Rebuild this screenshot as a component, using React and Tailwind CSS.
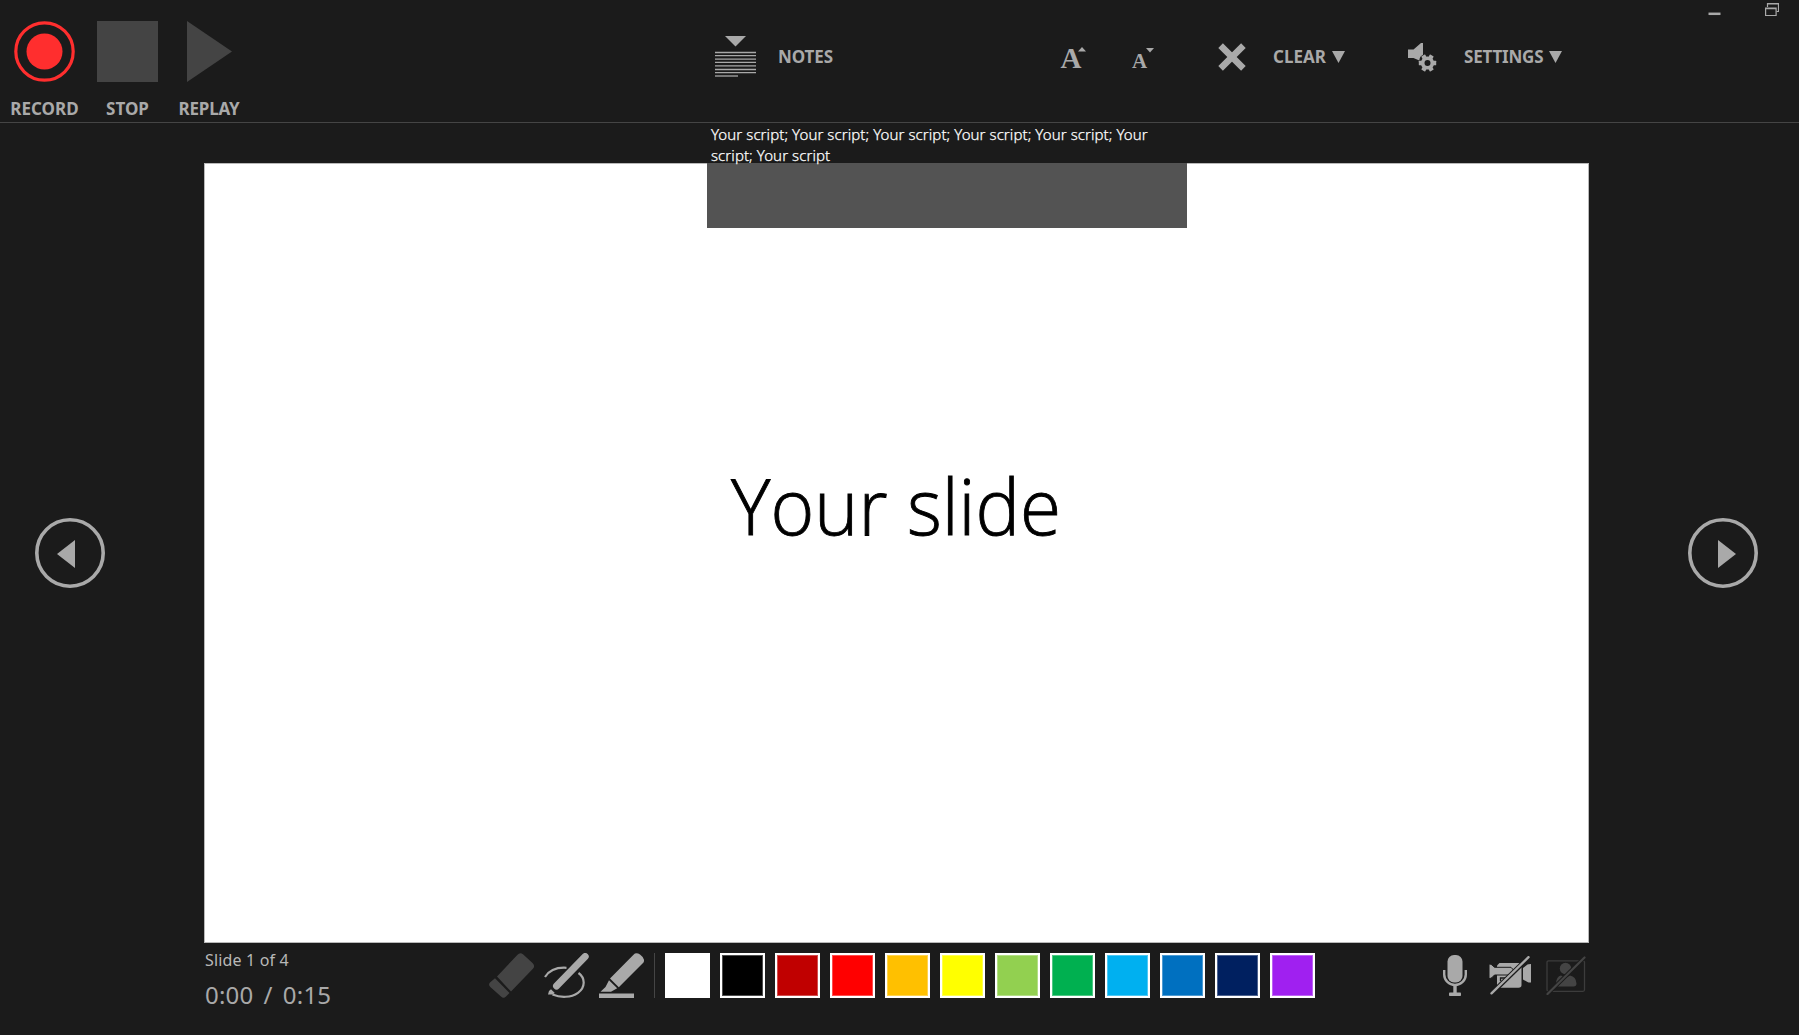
import React from "react";

const label = "font-['Noto_Sans','Open_Sans',sans-serif] text-[17px] leading-[20px] font-bold text-[#a9a9a9] whitespace-nowrap";

const swatches = [
  "#ffffff", "#000000", "#c00000", "#ff0000", "#ffc000", "#ffff00",
  "#92d050", "#00b050", "#00b0f0", "#0070c0", "#002060", "#a020f0",
];

function NotesIcon() {
  const lines = [52.5, 55.7, 59.2, 62.4, 65.8, 69.5, 72.6];
  return (
    <svg width="41" height="42" viewBox="0 36 41 42" className="shrink-0">
      <path d="M10 36h21l-10.500 10.500z" fill="#a9a9a9" />
      {lines.map((y) => (
        <path key={y} d={`M0 ${y}h41`} stroke="#a9a9a9" strokeWidth="1.300" />
      ))}
      <path d="M0 76h23" stroke="#a9a9a9" strokeWidth="1.300" />
    </svg>
  );
}

function AudioSettingsIcon() {
  return (
    <svg width="29" height="29" viewBox="0 0 29 29" className="shrink-0" fill="#a9a9a9">
      <path d="M0 6.500h5.500L13 0h2v11.800c-2.200 1-3.400 2.700-3.700 5.700L5.500 15H0z" />
      <g transform="translate(19.5 20)">
        <path
          fillRule="evenodd"
          d="M0-6.600a6.600 6.600 0 1 0 0 13.200a6.600 6.600 0 1 0 0-13.200zM0-3a3 3 0 1 1 0 6a3 3 0 1 1 0-6z"
        />
        {[30, 90, 150, 210, 270, 330].map((a) => (
          <rect key={a} x="-2.200" y="-8.700" width="4.400" height="4" rx="0.500" transform={`rotate(${a})`} />
        ))}
      </g>
    </svg>
  );
}

function EraserIcon() {
  return (
    <svg width="45" height="45" viewBox="0 0 45 45" fill="#444444" className="shrink-0">
      <path d="M8 23.500 28.500 1.800Q31 -1 34 1.300L43.500 10Q46.500 13 43.700 16L22 38.500z" />
      <path d="M6 25.300 20.500 40 17 43.600Q14.500 46 12 43.600L1.300 34Q-1 31.500 1 29.500z" />
    </svg>
  );
}

function PenIcon() {
  return (
    <svg width="45" height="45" viewBox="0 0 45 45" fill="none" className="shrink-0">
      <path d="M1 24C5.500 17 13 14.200 22.500 14.800" stroke="#a9a9a9" strokeWidth="2.200" />
      <path d="M34.500 20C41.500 25 41.500 34.500 34 39.800C27 44.600 17 45 8.500 41.500" stroke="#a9a9a9" strokeWidth="2.200" />
      <path d="M12.500 33 41.200 3.500" stroke="#a9a9a9" strokeWidth="7" strokeLinecap="round" />
      <path d="M7 36.200 10.800 40 8.500 41.500 4 41.500 5 38z" fill="#a9a9a9" />
    </svg>
  );
}

function HighlighterIcon() {
  return (
    <svg width="45" height="45" viewBox="0 0 45 45" fill="#a9a9a9" className="shrink-0">
      <path d="M11 25.500 34.500 1.800Q37 -1 41 1.500Q46.500 5.500 44.500 9.500L19.800 34.200z" />
      <path d="M10 27.300 18.200 35.200 12 38.800H1.500L6.500 34z" />
      <path d="M0 40.500h35V45H0z" />
    </svg>
  );
}

function MicIcon() {
  return (
    <svg width="24" height="41" viewBox="0 0 24 41" fill="#a9a9a9" className="shrink-0">
      <rect x="4.500" y="0" width="15" height="27.500" rx="6.500" />
      <path d="M1.200 15v4.500a10.800 10.500 0 0 0 21.600 0V15" fill="none" stroke="#a9a9a9" strokeWidth="2.400" />
      <path d="M10.300 29.500h3.400V38h-3.400z" />
      <rect x="6" y="37.500" width="12" height="3.500" rx="0.800" />
    </svg>
  );
}

function CameraOffIcon() {
  return (
    <svg width="42" height="39" viewBox="0 0 42 39" className="shrink-0" fill="#a9a9a9">
      <path d="M8 11V9.500L10.500 7H29.500Q32.500 7 32.500 10V29Q32.500 31.800 29.500 31.800H8z" />
      <path d="M34 12 38.500 8.500Q39 8 42 8V26.500Q39 26.500 38.500 26L34 23.500z" />
      <path
        d="M0 8Q2.500 8 3 9L5.500 11.300H22L24.500 14 21 19H5.500L3 21.500Q2.500 22.500 0 22.500z"
        stroke="#1b1b1b"
        strokeWidth="1"
      />
      <path d="M11.500 25V22H16" fill="none" stroke="#1b1b1b" strokeWidth="1.300" />
      <path d="M2.500 37.500 40 1" stroke="#1b1b1b" strokeWidth="4.600" />
      <path d="M2.500 37.300 39.500 1.200" stroke="#a9a9a9" strokeWidth="2.400" strokeLinecap="round" />
    </svg>
  );
}

function PreviewOffIcon() {
  return (
    <svg width="40" height="39" viewBox="0 0 40 39" className="shrink-0" fill="#444444">
      <rect x="1" y="4.800" width="37.500" height="30.500" rx="1.500" fill="none" stroke="#3c3c3c" strokeWidth="1.300" />
      <circle cx="19.500" cy="12.500" r="5.700" />
      <path d="M10 30.500V27Q10.500 20.500 15 19.500L19.500 22 24 19.500Q30 20.500 30.500 27.500Q30.500 30.500 27.500 30.500z" />
      <path d="M1.500 38 38.500 1.500" stroke="#1b1b1b" strokeWidth="4" />
      <path d="M1.500 38 38.500 1.500" stroke="#444444" strokeWidth="2.200" strokeLinecap="round" />
    </svg>
  );
}

function NavButton({ next }) {
  return (
    <button className="flex size-[70px] shrink-0 items-center justify-center" aria-label={next ? "Next" : "Previous"}>
      <svg width="70" height="70" viewBox="0 0 70 70">
        <circle cx="35" cy="35" r="33.200" fill="none" stroke="#a9a9a9" strokeWidth="3.600" />
        <path d={next ? "M30 22v28l18-14z" : "M40 22v28L22 36z"} fill="#a9a9a9" />
      </svg>
    </button>
  );
}

function DownTriangle() {
  return (
    <svg width="13" height="12" viewBox="0 0 13 12" className="shrink-0">
      <path d="M0 0h13L6.500 12z" fill="#a9a9a9" />
    </svg>
  );
}

export default function App() {
  return (
    <div className="flex h-[1035px] w-[1799px] flex-col overflow-hidden bg-[#1b1b1b] font-['Open_Sans','Noto_Sans',sans-serif]">
      <header className="flex h-[123px] shrink-0 border-b border-[#454545]">
        <div className="flex w-[715px] pt-[21px]">
          <button className="flex w-[89px] flex-col items-center gap-[17px]">
            <svg width="61" height="61" viewBox="0 0 61 61">
              <circle cx="30.500" cy="30.500" r="28.700" fill="none" stroke="#ff2e2e" strokeWidth="3.200" />
              <circle cx="30.500" cy="30.500" r="18" fill="#ff2e2e" />
            </svg>
            <span className={label}>RECORD</span>
          </button>
          <button className="flex w-[77px] flex-col items-center gap-[17px]">
            <span className="size-[61px] bg-[#444444]" />
            <span className={label}>STOP</span>
          </button>
          <button className="flex w-[86px] flex-col items-center gap-[17px]">
            <svg width="45" height="61" viewBox="0 0 45 61">
              <path d="M0 0v61l45-30.500z" fill="#444444" />
            </svg>
            <span className={label + " tracking-[-0.2px]"}>REPLAY</span>
          </button>
        </div>
        <div className="flex h-[114px] w-[345px] items-center gap-[22px]">
          <NotesIcon />
          <span className={label + " tracking-[-0.1px]"}>NOTES</span>
        </div>
        <div className="flex h-[114px] w-[158px] items-center gap-[46px]">
          <svg width="27" height="24" viewBox="0 0 27 24" className="shrink-0 overflow-visible" fill="#a9a9a9">
            <text x="0.500" y="23.300" fontSize="29" fontWeight="700" fontFamily="Liberation Serif">A</text>
            <path d="M18 6.500h8L22 2z" />
          </svg>
          <svg width="23" height="24" viewBox="0 0 23 24" className="shrink-0 overflow-visible" fill="#a9a9a9">
            <text x="-1" y="23.300" fontSize="21" fontWeight="700" fontFamily="Liberation Serif">A</text>
            <path d="M13 3h8l-4 4.500z" />
          </svg>
        </div>
        <div className="flex h-[114px] w-[190px] items-center">
          <svg width="28" height="28" viewBox="0 0 28 28" className="shrink-0">
            <path d="M2.600 2.600 25.400 25.400M25.400 2.600 2.600 25.400" stroke="#a9a9a9" strokeWidth="6.500" />
          </svg>
          <span className={label + " ml-[27px] w-[59px]"}>CLEAR</span>
          <DownTriangle />
        </div>
        <div className="flex h-[114px] items-center">
          <AudioSettingsIcon />
          <span className={label + " ml-[27px] w-[85px] tracking-[-0.2px]"}>SETTINGS</span>
          <DownTriangle />
        </div>
        <div className="ml-auto flex h-[19px] gap-[44px] pt-[2px] pr-[20px]">
          <svg width="13" height="15" viewBox="0 0 13 15">
            <path d="M0.500 11.800h12" stroke="#a9a9a9" strokeWidth="2.500" />
          </svg>
          <svg width="14" height="15" viewBox="0 0 14 15" fill="none" stroke="#a9a9a9" strokeWidth="1.200">
            <path d="M2.500 5V1.500h11v8H11.500M2.500 2h11" />
            <path d="M0.600 6h10.500v7.500H0.600zM0.600 6.700h10.500" />
          </svg>
        </div>
      </header>

      <main className="relative flex h-[820px] shrink-0 pt-[40px]">
        <div className="flex w-[204px] shrink-0 items-center pl-[35px]">
          <NavButton />
        </div>
        <section className="flex h-[780px] w-[1385px] shrink-0 justify-center border border-[#b9b9b9] bg-white pt-[289px]">
          <h1 className="origin-center scale-x-[0.97] text-[77px] leading-[105px] font-light whitespace-nowrap text-black [-webkit-text-stroke:0.9px_#000]">
            Your slide
          </h1>
        </section>
        <div className="flex items-center pl-[99px]">
          <NavButton next />
        </div>
        <aside className="absolute top-0 left-[707px] h-[105px] w-[480px]">
          <div className="relative h-[40px] px-1 pt-px font-['Noto_Sans',sans-serif] text-[15px] leading-[21px] font-light tracking-[0.075px] text-white [-webkit-text-stroke:0.25px_#fff]">
            Your script; Your script; Your script; Your script; Your script; Your script; Your script
          </div>
          <div className="h-[65px] bg-[#535353]" />
        </aside>
      </main>

      <footer className="flex h-[92px] shrink-0 items-start">
        <div className="w-[489px] pl-[205px] font-['Noto_Sans',sans-serif] text-[#b8b8b8]">
          <div className="pt-[6px] text-[16px] leading-[22px] tracking-[0.16px]">Slide 1 of 4</div>
          <div className="pt-[8px] text-[24px] leading-[32px] tracking-[0.2px] [word-spacing:3.7px] text-[#a9a9a9]">0:00 / 0:15</div>
        </div>
        <div className="flex gap-[10px] pt-[10px]">
          <EraserIcon />
          <PenIcon />
          <HighlighterIcon />
          <div className="h-[45px] w-px bg-[#454545]" />
          {swatches.map((c) => (
            <button key={c} className="size-[45px] border-2 border-white" style={{ backgroundColor: c }} aria-label={c}>
              <span className="block size-full border border-white/30" />
            </button>
          ))}
        </div>
        <div className="ml-[128px] flex pt-[12px]">
          <MicIcon />
          <span className="ml-[22px] pt-px"><CameraOffIcon /></span>
          <span className="ml-[15px] pt-px"><PreviewOffIcon /></span>
        </div>
      </footer>
    </div>
  );
}
